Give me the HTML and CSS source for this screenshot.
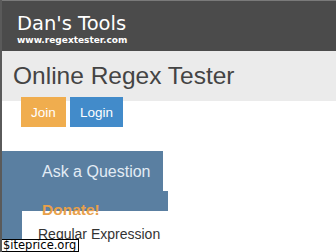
FILE: index.html
```html
<!DOCTYPE html>
<html lang="en">
<head>
    <meta charset="UTF-8">
    <meta name="viewport" content="width=device-width, initial-scale=1.0">
    <title>Online Regex Tester</title>
    <link rel="stylesheet" href="styles.css">
</head>
<body>

    <header class="brand">
        <div class="brand-name">Dan's Tools</div>
        <div class="brand-url">www.regextester.com</div>
    </header>

    <div class="title-band">
        <h1>Online Regex Tester</h1>
    </div>

    <div class="actions">
        <button class="btn btn-join">Join</button>
        <button class="btn btn-login">Login</button>
    </div>

    <div class="widget">
        <div class="ask-tab">Ask a Question</div>
        <div class="donate-strip"><span class="donate">Donate!</span></div>
        <div class="widget-body">
            <div class="rail"></div>
            <div class="panel">Regular Expression</div>
        </div>
    </div>

    <div class="stamp">$iteprice.org</div>

</body>
</html>
```

FILE: styles.css
```css
html, body {
    margin: 0;
    padding: 0;
}

body {
    width: 334px;
    height: 252px;
    overflow: hidden;
    border-left: 2px solid #5a5a5a;
    background: #fff;
    font-family: 'Liberation Sans', Arial, sans-serif;
    position: relative;
}

.brand {
    background: #4b4b4b;
    border-top: 1px solid #7a7a7a;
    height: 51px;
    box-sizing: border-box;
    padding: 11px 0 0 15px;
    color: #fff;
}

.brand-name {
    font-family: 'Comic Sans MS', 'DejaVu Sans', sans-serif;
    font-size: 19.5px;
    line-height: 23px;
}

.brand-url {
    font-family: 'Comic Sans MS', 'DejaVu Sans', sans-serif;
    font-size: 9px;
    font-weight: bold;
    line-height: 11px;
}

.title-band {
    background: #ebebeb;
    height: 50px;
    box-sizing: border-box;
    padding: 11px 0 0 11px;
}

.title-band h1 {
    margin: 0;
    font-size: 24.5px;
    font-weight: normal;
    line-height: 28px;
    color: #444;
}

.actions {
    display: flex;
    gap: 4px;
    margin: -4px 0 0 19px;
}

.btn {
    border: none;
    border-radius: 0;
    height: 30px;
    padding: 0;
    color: #fff;
    font-family: 'Liberation Sans', Arial, sans-serif;
    font-size: 13.5px;
}

.btn-join {
    width: 45px;
    background: #f0ad4e;
}

.btn-login {
    width: 53px;
    background: #428bca;
}

.widget {
    margin-top: 24px;
}

.ask-tab {
    width: 161px;
    height: 40px;
    box-sizing: border-box;
    padding: 11px 0 0 40px;
    background: #5a7fa1;
    color: #e2ecf5;
    font-size: 16px;
    line-height: 19px;
}

.donate-strip {
    width: 166px;
    height: 20px;
    box-sizing: border-box;
    padding: 10px 0 0 40px;
    background: #5a7fa1;
}

.donate {
    display: block;
    color: #e8a04a;
    font-size: 15.5px;
    font-weight: bold;
    line-height: 18px;
    position: relative;
}

.widget-body {
    display: grid;
    grid-template-columns: 20px 1fr;
    height: 40px;
}

.rail {
    background: #5a7fa1;
}

.panel {
    padding: 14px 0 0 16px;
    color: #333;
    font-size: 14px;
    line-height: 18px;
}

.stamp {
    position: absolute;
    left: -2px;
    bottom: 0;
    padding: 0 2px;
    background: #fff;
    border: 1px solid #000;
    color: #000;
    font-family: 'DejaVu Sans', sans-serif;
    font-size: 11.5px;
    line-height: 11px;
}
```
